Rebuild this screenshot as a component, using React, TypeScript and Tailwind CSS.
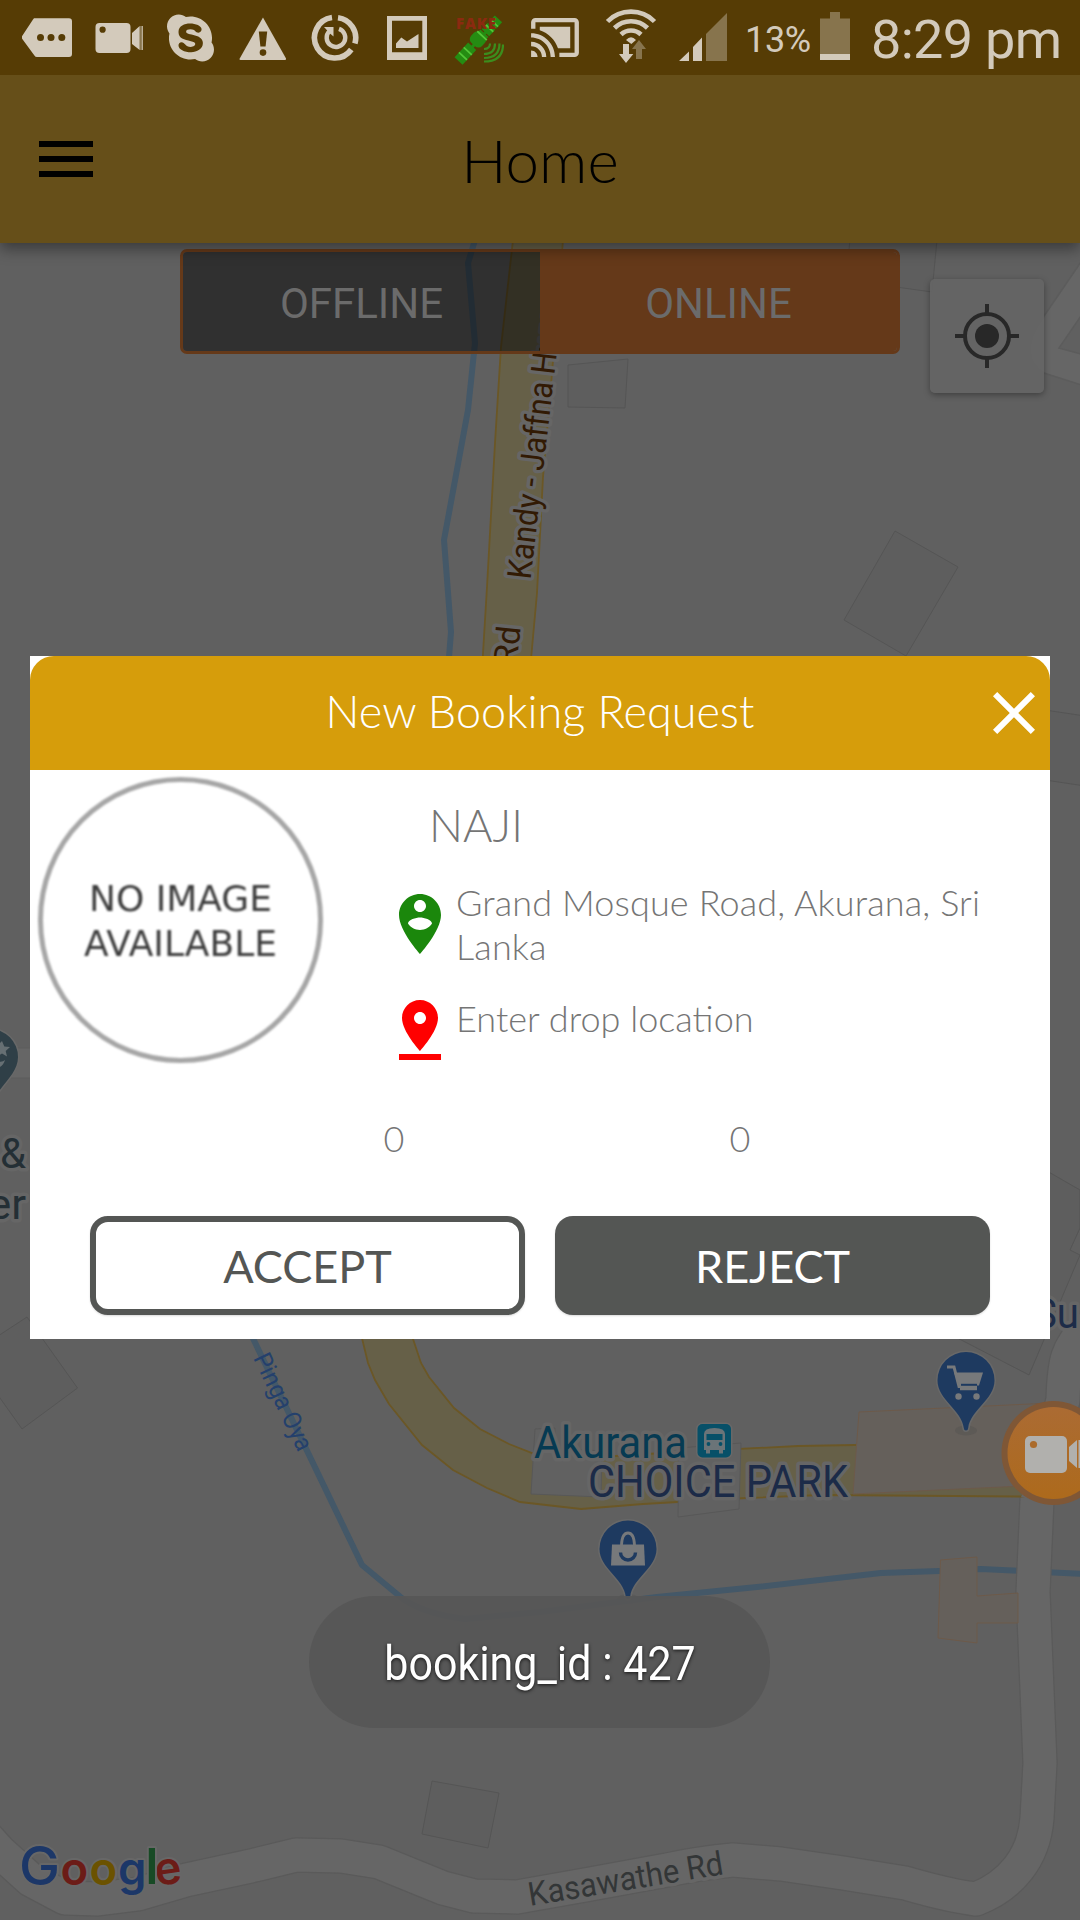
import React from "react";
import { FaSkype } from "react-icons/fa";

const ICON = "#d3cabb";
const DIM = "#87744d";

function StatusBar() {
  return (
    <div className="flex h-[75px] w-full items-center bg-[#563c05] pl-[22px] font-['Roboto',sans-serif] text-[#d3cabb]">
      <svg className="h-[75px] w-[50px] shrink-0" viewBox="22 0 50 75">
        <path d="M34 18.3H69a3 3 0 0 1 3 3V54a3 3 0 0 1-3 3H37a3 3 0 0 1-2.6-1.500L22.300 39a3 3 0 0 1 0-3.200L33 19.500Z" fill={ICON} />
        <g fill="#563c05"><circle cx="40.500" cy="37.400" r="3.500" /><circle cx="51" cy="37.400" r="3.500" /><circle cx="61.800" cy="37.400" r="3.500" /></g>
      </svg>
      <svg className="ml-[23px] h-[75px] w-[49px] shrink-0" viewBox="95 0 49 75">
        <rect x="95.500" y="23" width="35" height="30" rx="4" fill={ICON} />
        <circle cx="102.600" cy="29.700" r="3.100" fill="#563c05" />
        <path d="M132 33 139.700 26V50L132 44ZM140.600 26h.9v24h-.9zM142 26h.8v24h-.8z" fill={ICON} />
      </svg>
      <FaSkype className="ml-[23px] h-[54px] w-[47px] shrink-0" />
      <svg className="ml-[25px] h-[75px] w-[47px] shrink-0" viewBox="239 0 47 75">
        <path d="M263 17.500 286 58.500Q286.400 60 285 60H240.500Q239 60 239.700 58.500Z" fill={ICON} />
        <path d="M258.800 31.500h8.400l-1.600 15h-5.200z" fill="#563c05" />
        <circle cx="263" cy="52.600" r="3.300" fill="#563c05" />
      </svg>
      <svg className="ml-[25px] h-[75px] w-[49px] shrink-0" viewBox="311 0 49 75" fill="none" stroke={ICON}>
        <path d="M338 17.700A20.300 20.300 0 0 1 354.900 43.500M351.300 49.500A20.300 20.300 0 1 1 332 17.600" strokeWidth="5.600" />
        <path d="M339 28.900A9.300 9.300 0 1 1 329.500 31" strokeWidth="4.400" />
        <path d="M324 27H333.500V36.500L330 33.500Z" fill={ICON} stroke="none" />
      </svg>
      <svg className="ml-[27px] h-[75px] w-[40px] shrink-0" viewBox="387 0 40 75">
        <path fillRule="evenodd" d="M387 16h40v44h-40zM392 20.700v31.600h30.300V20.700z" fill={ICON} />
        <path d="M396 48V43.500L401.300 37.500 407 41.500 418.500 34V48Z" fill={ICON} />
      </svg>
      <svg className="ml-[27px] h-[75px] w-[50px] shrink-0" viewBox="454 0 50 75">
        <g transform="rotate(-47 479 39)" fill="#258c12">
          <path d="M468 38h22v3h-22z" />
          <rect x="449" y="33.500" width="20" height="11" />
          <rect x="488" y="34.500" width="19" height="10" />
          <rect x="471" y="31" width="14" height="15" rx="5" />
          <path d="M485.500 33.500v11" stroke="#258c12" strokeWidth="3" />
          <path d="M455.500 33.500v11M462.500 33.500v11M483.500 32.500v13M494 34.500v10M501 34.500v10" stroke="#52c536" strokeWidth="1.800" />
          <path d="M497.500 34v11" stroke="#563c05" strokeWidth="1.500" />
        </g>
        <path d="M484 49q6 0 6-5.500M484 54q11 0 11-10.500M484 58q15.500 0 15.500-14.500M484 61.500q19 0 19-17" fill="none" stroke="#3c8d1d" strokeWidth="2.200" />
        <text x="456" y="28.500" fontSize="15" fontWeight="800" textLength="40" fill="#8b2a10" fontFamily="Open Sans, sans-serif">FAKE</text>
      </svg>
      <svg className="ml-[26px] h-[39px] w-[50px] shrink-0" viewBox="0.500 3 23 18" preserveAspectRatio="none" fill={ICON}>
        <path d="M1 18v3h3c0-1.660-1.340-3-3-3zm0-4v2c2.760 0 5 2.240 5 5h2c0-3.870-3.130-7-7-7zm18-7H5v1.630c3.960 1.280 7.090 4.410 8.370 8.370H19V7zM1 10v2c4.970 0 9 4.030 9 9h2c0-6.080-4.930-11-11-11zm20-7H3c-1.100 0-2 .9-2 2v3h2V5h18v14h-7v2h7c1.100 0 2-.9 2-2V5c0-1.100-.9-2-2-2z" />
      </svg>
      <svg className="ml-[25px] h-[75px] w-[52px] shrink-0" viewBox="605 0 52 75">
        <g fill="none" stroke={ICON} strokeWidth="4.600">
          <path d="M607.500 21.500A33 33 0 0 1 654.500 21.500" />
          <path d="M614.500 28A23.500 23.500 0 0 1 647.500 28" />
          <path d="M621 34.500A14.500 14.500 0 0 1 641 34.500" />
        </g>
        <path d="M626 40Q631 34.500 636 40L631.300 44Z" fill={ICON} />
        <path d="M623 44h6v10h4.300L626 63 619 54h4z" fill={ICON} />
        <path d="M639 40 646 49h-4v10h-6V49h-4z" fill={DIM} />
      </svg>
      <svg className="ml-[22px] h-[75px] w-[49px] shrink-0" viewBox="679 0 49 75">
        <path d="M679 61 689 51.500V61ZM693 61V47L702 37.500V61Z" fill={ICON} />
        <path d="M706 61V34L727 13V61Z" fill={DIM} />
      </svg>
      <span className="ml-[17px] mt-1 w-[67px] whitespace-nowrap text-[36px] leading-none tracking-[-0.3px]">13%</span>
      <svg className="ml-[8px] h-[75px] w-[30px] shrink-0" viewBox="820 0 30 75">
        <path d="M820 18.500H830V12H840V18.500H850V54H820Z" fill={DIM} />
        <path d="M820 54h30v6h-30z" fill={ICON} />
      </svg>
      <span className="ml-[21px] mt-[5px] whitespace-nowrap text-[54px] leading-none tracking-[-0.7px]">8:29 pm</span>
    </div>
  );
}

function AppBar() {
  return (
    <header className="grid h-[168px] grid-cols-[102px_1fr_102px] items-center bg-[#664f19] text-black">
      <svg className="ml-[30px] size-[72px]" viewBox="0 0 24 24"><path d="M3 18h18v-2H3v2zm0-5h18v-2H3v2zm0-7v2h18V6H3z" /></svg>
      <h1 className="pt-[2px] text-center text-[60px] font-light leading-none">Home</h1>
    </header>
  );
}

type LabelProps = { x: number; y: number; w?: number; size: number; fill: string; rotate?: number; children: string };

function Label({ x, y, w, size, fill, rotate = 0, children }: LabelProps) {
  return (
    <text
      transform={`translate(${x} ${y}) rotate(${rotate})`}
      fontSize={size}
      fill={fill}
      stroke="#666666"
      strokeWidth="7"
      strokeLinejoin="round"
      paintOrder="stroke"
      textLength={w}
      lengthAdjust="spacingAndGlyphs"
      fontFamily="Roboto, sans-serif"
    >
      {children}
    </text>
  );
}

const LANES = [
  "M1090 1325C1066 1348 1064 1362 1063 1400L1037 1500L1033 1592 1040 1763 1037 1818C1034 1858 1010 1886 976 1899Q950 1896 905 1883L843 1873 781 1864 733 1860Q700 1863 667 1870L585 1885 517 1897 474 1896 443 1888 379 1862 341 1856 296 1855 255 1865 186 1880 138 1894 98 1899 65 1898 31 1880 0 1852 -20 1830",
];

function MapPin({ x, y, children }: { x: number; y: number; children: React.ReactNode }) {
  return (
    <g transform={`translate(${x} ${y})`}>
      <ellipse cx="0" cy="50" rx="11" ry="5" fill="#4c4c4c" opacity=".3" />
      <path d="M0-28.500A28.500 28.500 0 0 1 28.500 0C28.500 19 4 30 2.200 47.500Q2 50 0 50T-2.200 47.500C-4 30-28.500 19-28.500 0A28.500 28.500 0 0 1 0-28.500Z" fill="#1e3a60" stroke="#686868" strokeWidth="3" paintOrder="stroke" />
      {children}
    </g>
  );
}

function MapCanvas() {
  return (
    <svg className="absolute inset-0 h-[1920px] w-[1080px]" viewBox="0 0 1080 1920">
      <rect width="1080" height="1920" fill="#606060" />
      {/* buildings */}
      <g fill="#5e5e5e" stroke="#555555" strokeWidth="1">
        <path d="M568 365 628 359 625 408 568 407Z" />
        <path d="M895 531 958 567 906 656 844 620Z" />
        <path d="M850 240H937L932 292 846 280Z" />
        <path d="M1045 710 1085 716V786L1045 780Z" />
        <path d="M1040 1167 1080 1190V1228L1070 1250 1080 1255 1029 1375 940 1329Z" />
        <path d="M27 1317 77.500 1388 22 1429-5 1391V1338Z" />
        <path d="M432 1781 499 1793 488 1848 422 1834Z" />
      </g>
      {/* minor roads */}
      <path d="M1085 256 1040 322C1026 343 1026 362 1044 373L1085 386V355L1059 348 1085 310Z" fill="#666666" stroke="#5c5c5c" strokeWidth="1.500" />
      <path d="M-5 1048H40V1078H-5Z" fill="#666666" stroke="#5c5c5c" strokeWidth="1" />
      {/* river */}
      <g fill="none" stroke="#445868" strokeWidth="6" strokeLinejoin="round">
        <path d="M475 240 468 263 475 343 468 410 444 540 451 632 448 670" />
        <path d="M248 1328 362 1565 403 1599Q425 1614 465 1619L540 1612 657 1597 757 1587 881 1573 939 1571 981 1569 1085 1574" />
      </g>
      {LANES.map((d) => (
        <g key={d} fill="none" strokeLinejoin="round">
          <path d={d} stroke="#5a5a5a" strokeWidth="35.500" />
          <path d={d} stroke="#666666" strokeWidth="33" />
        </g>
      ))}
      {/* highway */}
      <g fill="#666048" stroke="#6b5726" strokeWidth="1.800">
        <path d="M513 240 501 347 495 443 487 587 482 670H530L537 593 543 477 550 397 563 240Z" />
        <path d="M360 1330 368 1363 375 1380 389 1404 422 1445 453 1470 487 1488 520 1502 581 1509 643 1504 747 1498 822 1495 1085 1497V1440L855 1445 798 1446 678 1452 600 1457 532 1453 509 1444 480 1429 454 1408 429 1377 421 1363 410 1330Z" />
      </g>
      <path d="M1050 1435V1410L1077 1400 1073 1440 1053 1505 1021 1497Z" fill="#666666" />
      <g fill="#616161" stroke="#585858" strokeWidth="1">
        <path d="M535 1429 555 1428V1448L602 1451 601 1497 531 1494Z" />
        <path d="M679 1448 741 1443 739 1509 678 1517Z" />
      </g>
      <g fill="#65605b" stroke="#6d5a4a" strokeWidth="1">
        <path d="M859 1412 1051 1403 1044.500 1485 853 1494Z" />
        <path d="M940.500 1560 977 1557V1596L1018 1593V1623H977V1643L938 1638Z" />
      </g>
      {/* road and place labels */}
      <Label x={530.500} y={580} w={266} size={33.500} rotate={-83.400} fill="#321a04">Kandy - Jaffna Hwy</Label>
      <Label x={516.500} y={666} w={39} size={33} rotate={-84} fill="#321a04">Rd</Label>
      <g stroke="none">
        <text transform="translate(253 1358) rotate(64.500)" fontSize="25" textLength="105" lengthAdjust="spacingAndGlyphs" fill="#24406c" fontFamily="Roboto, sans-serif">Pinga Oya</text>
      </g>
      <Label x={530} y={1906} w={197} size={33} rotate={-9.300} fill="#333637">Kasawathe Rd</Label>
      <Label x={0} y={1168} w={26} size={43} fill="#242f35">&amp;</Label>
      <Label x={-12} y={1219} w={38} size={43} fill="#242f35">er</Label>
      <Label x={1033} y={1328} w={46} size={42} fill="#1d2c48">Su</Label>
      <Label x={534} y={1457.500} w={153} size={43.500} fill="#063a52">Akurana</Label>
      <Label x={588} y={1497} w={260} size={43.500} fill="#1c2b48">CHOICE PARK</Label>
      {/* bus stop */}
      <rect x="697.500" y="1424" width="33.500" height="33.500" rx="5" fill="#075068" stroke="#686868" strokeWidth="3" paintOrder="stroke" />
      <path fillRule="evenodd" d="M704 1434q0-6 10.500-6t10.500 6v16h-2v3.500h-4V1450h-9v3.500h-4V1450h-2zM706.500 1434v6h16v-6z" fill="#6b7478" />
      <circle cx="708.500" cy="1444" r="1.900" fill="#075068" /><circle cx="720.500" cy="1444" r="1.900" fill="#075068" />
      {/* points of interest */}
      <path d="M-10 1029A28 28 0 0 1 18 1057C18 1072 5 1081-5 1097H-38V1029Z" fill="#2f3f47" stroke="#686868" strokeWidth="3" paintOrder="stroke" />
      <path d="M2 1041 4.300 1046.500 10 1047 5.700 1051 7 1056.500 2 1053.500-3 1056.500V1046ZM-3 1061Q2 1063 5 1060 3 1067-3 1068Z" fill="#666f73" />
      <MapPin x={966} y={1380.500}>
        <path d="M-19-13.500H-12L-7 6H11" fill="none" stroke="#77797b" strokeWidth="3" />
        <path d="M-12-8H17L13 5H-7Z" fill="#77797b" />
        <path d="M-5 4.300H11" stroke="#1e3a60" strokeWidth="2" />
        <path d="M-6 8.500H11" stroke="#77797b" strokeWidth="2.500" />
        <circle cx="-7.500" cy="16" r="3.200" fill="#77797b" /><circle cx="10.500" cy="16" r="3.200" fill="#77797b" />
      </MapPin>
      <MapPin x={628} y={1549}>
        <path d="M-16-4.500H16L17 16.500H-17Z" fill="#77797b" />
        <path d="M-6.500-4Q-6-16 0-16T6.500-4" fill="none" stroke="#77797b" strokeWidth="2.800" />
        <path d="M-7.500 3.500A7.500 7.500 0 0 0 7.500 3.500" fill="none" stroke="#1e3a60" strokeWidth="3.400" />
      </MapPin>
      {/* map provider wordmark */}
      <g fontFamily="Inter, sans-serif" fontWeight="600" stroke="#676767" strokeWidth="4" paintOrder="stroke" strokeLinejoin="round">
        <text x="19" y="1884.500" fontSize="53" textLength="41" lengthAdjust="spacingAndGlyphs" fontWeight="500" fill="#1c3768">G</text>
        <text x="60.500" y="1884.500" fontSize="45.500" fill="#6c1c17">o</text>
        <text x="89.500" y="1884.500" fontSize="45.500" fill="#6b5200">o</text>
        <text x="118" y="1884.500" fontSize="45.500" fill="#1c3768">g</text>
        <text transform="translate(156.500 1886) rotate(-8)" fontSize="45.500" fill="#6c1c17">e</text>
        <text x="145.500" y="1884" fontSize="49" fill="#174a25">l</text>
      </g>
    </svg>
  );
}

function MapControls() {
  return (
    <div className="flex items-start pl-[180px] pt-[6px] font-['Roboto',sans-serif] text-[42px] leading-none text-[#6b6b6b]">
      <div className="flex h-[105px] w-[720px] overflow-hidden rounded-[7px] border-[3px] border-[#653919]">
        <div className="flex flex-1 items-center justify-center bg-black/50 pt-1"><span>OFFLINE</span></div>
        <div className="flex flex-1 items-center justify-center bg-[#653919] pt-1"><span>ONLINE</span></div>
      </div>
      <div className="ml-[30px] mt-[30px] flex size-[114px] items-center justify-center rounded-[5px] bg-[#656565]/90 shadow-[0_2px_6px_rgba(0,0,0,0.35)]">
        <svg className="size-[64px]" viewBox="-32 -32 64 64" fill="none" stroke="#282828" strokeWidth="4">
          <circle r="22" />
          <path d="M0-32v9M0 23v9M-32 0h9M23 0h9" />
          <circle r="12" fill="#282828" stroke="none" />
        </svg>
      </div>
    </div>
  );
}

function BookingDialog() {
  return (
    <section className="absolute left-[30px] top-[656px] flex h-[683px] w-[1020px] flex-col bg-white text-[#757575]">
      <div className="grid h-[114px] grid-cols-[72px_1fr_72px] items-center rounded-t-[24px] bg-[#d69d0b] text-white">
        <h2 className="col-start-2 pb-[4px] text-center text-[45px] font-light leading-none">New Booking Request</h2>
        <svg className="size-[72px]" viewBox="0 0 24 24" fill="currentColor"><path d="M19 6.410 17.590 5 12 10.590 6.410 5 5 6.410 10.590 12 5 17.590 6.410 19 12 13.410 17.590 19 19 17.590 13.410 12z" /></svg>
      </div>
      <div className="flex h-[356px]">
        <div className="w-[354px] pl-[8px] pt-[7px]">
          <div className="flex h-[286px] w-[285px] flex-col items-center justify-center rounded-full border-[5px] border-[#a6a6a6] pt-[2px] font-['DejaVu_Sans',sans-serif] text-[36px] leading-[45px] text-[#3c3c3c] blur-[0.8px]">
            <span>NO IMAGE</span>
            <span>AVAILABLE</span>
          </div>
        </div>
        <div className="flex flex-1 flex-col font-light">
          <div className="ml-[45px] mt-[28px] text-[45px] leading-[54px]">NAJI</div>
          <div className="mt-[28px] flex">
            <svg className="mt-[8px] size-[72px] shrink-0" viewBox="0 0 24 24" fill="#1b870c"><path d="M12 2C8.140 2 5 5.140 5 9c0 5.250 7 13 7 13s7-7.750 7-13c0-3.860-3.140-7-7-7zm0 2c1.100 0 2 .9 2 2 0 1.110-.9 2-2 2s-2-.89-2-2c0-1.100.9-2 2-2zm0 10c-1.670 0-3.140-.85-4-2.150.02-1.320 2.670-2.050 4-2.050s3.980.73 4 2.050c-.86 1.300-2.330 2.150-4 2.150z" /></svg>
            <p className="w-[550px] text-[36px] leading-[44px] tracking-[0.13px]">Grand Mosque Road, Akurana, Sri Lanka</p>
          </div>
          <div className="mt-[26px] flex">
            <svg className="size-[72px] shrink-0" viewBox="0 0 24 24" fill="#ff0000"><path d="M18 8c0-3.310-2.690-6-6-6S6 4.690 6 8c0 4.500 6 11 6 11s6-6.500 6-11zm-8 0c0-1.100.9-2 2-2s2 .9 2 2-.89 2-2 2c-1.100 0-2-.9-2-2zM5 20v2h14v-2H5z" /></svg>
            <p className="pt-[2px] text-[36.1px] leading-[44px] [font-feature-settings:'liga','dlig']">Enter drop location</p>
          </div>
        </div>
      </div>
      <div className="flex h-[90px] pl-[191px] text-[36px] font-light leading-[24px]">
        <span className="w-[346px] text-center">0</span>
        <span className="w-[346px] text-center">0</span>
      </div>
      <div className="flex gap-[30px] px-[60px] text-[45px] leading-none">
        <button className="h-[99px] w-[435px] rounded-[18px] border-[6px] border-[#545654] bg-white pt-[2px] text-[#545654] shadow-[0_1px_2px_rgba(0,0,0,0.15)]">ACCEPT</button>
        <button className="h-[99px] w-[435px] rounded-[18px] bg-[#545654] pt-[2px] text-white shadow-[0_1px_2px_rgba(0,0,0,0.15)]">REJECT</button>
      </div>
    </section>
  );
}

function RecorderBubble() {
  return (
    <svg className="absolute left-[1000px] top-[1400px] h-[106px] w-[80px]" viewBox="1000 1400 80 106">
      <defs><linearGradient id="bubble" x1="0" y1="0" x2="0" y2="1"><stop offset="0" stopColor="#ab6b33" /><stop offset="1" stopColor="#ad6a1c" /></linearGradient></defs>
      <circle cx="1053.500" cy="1453" r="52" fill="#7f5736" />
      <circle cx="1053.500" cy="1453" r="46" fill="url(#bubble)" />
      <rect x="1025" y="1436" width="42" height="37" rx="5" fill="#b1b0ad" />
      <circle cx="1033.500" cy="1444.500" r="3.600" fill="#ab6b2c" />
      <path d="M1069 1447 1077 1440V1468L1069 1461ZM1078.500 1440h2v28h-2z" fill="#b1b0ad" />
    </svg>
  );
}

export default function App() {
  return (
    <main className="relative h-[1920px] w-[1080px] overflow-hidden bg-[#606060] font-['Lato',sans-serif]">
      <MapCanvas />
      <div className="relative z-10 shadow-[0_6px_14px_rgba(0,0,0,0.4)]">
        <StatusBar />
        <AppBar />
      </div>
      <div className="relative"><MapControls /></div>
      <RecorderBubble />
      <BookingDialog />
      <div className="absolute left-[309px] top-[1596px] flex h-[132px] w-[461px] items-center justify-center rounded-full bg-[#565656]/95 font-['Roboto',sans-serif] text-[48px] leading-none text-white">
        <span className="scale-x-[0.895] whitespace-nowrap pt-[3px] [text-shadow:0_1px_4px_rgba(0,0,0,0.8)]">booking_id : 427</span>
      </div>
    </main>
  );
}
